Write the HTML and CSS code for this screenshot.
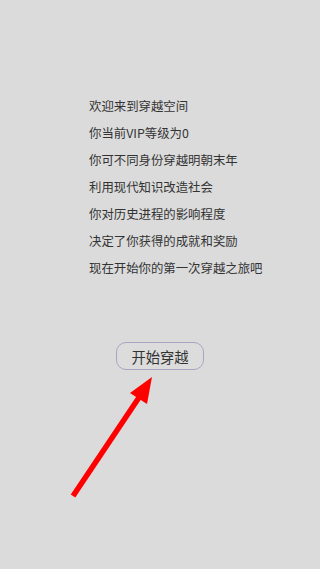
FILE: index.html
```html
<!DOCTYPE html>
<html lang="zh-CN">
<head>
<meta charset="utf-8">
<meta name="viewport" content="width=device-width, initial-scale=1">
<link rel="stylesheet" href="styles.css">
<title>穿越空间</title>
</head>
<body>
<main class="page">
  <div class="intro">
    <p class="line">欢迎来到穿越空间</p>
    <p class="line">你当前VIP等级为0</p>
    <p class="line">你可不同身份穿越明朝末年</p>
    <p class="line">利用现代知识改造社会</p>
    <p class="line">你对历史进程的影响程度</p>
    <p class="line">决定了你获得的成就和奖励</p>
    <p class="line">现在开始你的第一次穿越之旅吧</p>
  </div>
  <div class="actions">
    <button class="start">开始穿越</button>
  </div>
  <svg class="arrow" width="320" height="569" viewBox="0 0 320 569" aria-hidden="true">
    <line x1="73" y1="496" x2="140" y2="396" stroke="#ff0000" stroke-width="5.5" stroke-linecap="butt"/>
    <polygon points="152,377 130,393 147,404" fill="#ff0000"/>
  </svg>
</main>
</body>
</html>
```

FILE: styles.css
```css
html, body {
  margin: 0;
  padding: 0;
  background: #dbdbdb;
}
.page {
  position: relative;
  width: 320px;
  height: 569px;
  overflow: hidden;
  font-family: "Noto Sans CJK SC", "Noto Sans", sans-serif;
}
.intro {
  padding: 93px 0 0 89px;
}
.line {
  margin: 0;
  font-size: 12.4px;
  line-height: 27px;
  color: #333333;
  white-space: nowrap;
}
.actions {
  padding: 60px 0 0 116px;
}
.start {
  display: flex;
  align-items: center;
  justify-content: center;
  box-sizing: border-box;
  width: 88px;
  height: 28px;
  padding: 0;
  border: 1px solid #a9a6c4;
  border-radius: 10px;
  background: #dcdcdc;
  font-family: "Noto Sans CJK SC", "Noto Sans", sans-serif;
  font-size: 14.3px;
  color: #333333;
}
.arrow {
  position: absolute;
  left: 0;
  top: 0;
  pointer-events: none;
}
```
